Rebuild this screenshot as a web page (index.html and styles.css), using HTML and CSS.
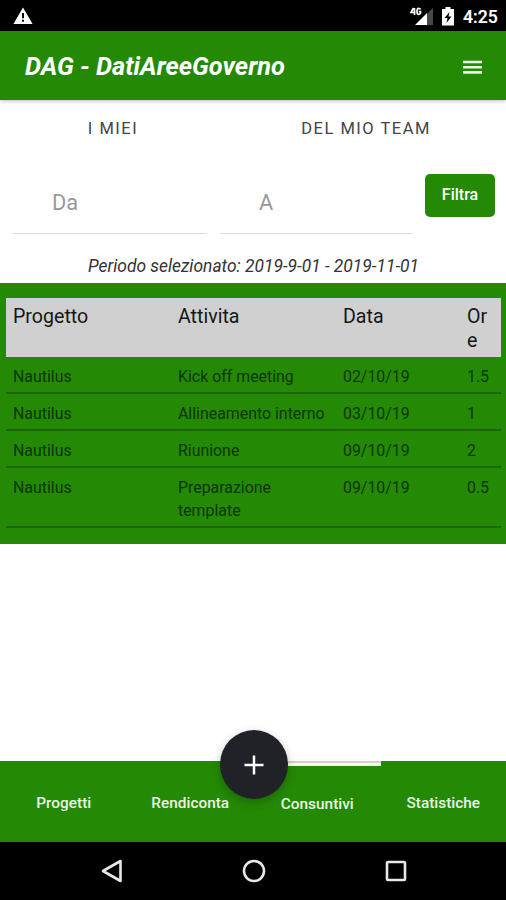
FILE: index.html
```html
<!DOCTYPE html>
<html lang="it">
<head>
<meta charset="utf-8">
<title>DAG - DatiAreeGoverno</title>
<link rel="stylesheet" href="styles.css">
</head>
<body>
<div class="screen">
  <div class="status">
    <svg class="warn" width="20" height="18" viewBox="0 0 20 18"><path d="M10 0.5L19.6 17H.4z" fill="#fff"/><path d="M10 6v5.200M10 12.700v2" stroke="#000" stroke-width="1.900"/></svg>
    <div class="status-right">
      <svg width="24" height="20" viewBox="0 0 24 20"><path d="M5 18L17 6V18z" fill="#fff"/><path d="M17 6.500L23 1V18H17z" fill="#484848"/><path d="M3.500 1L1 5.500H5.500M4.500 1V8M10.500 2.500Q10 1.300 8.700 1.300Q7 1.300 7 4.400Q7 7.300 8.700 7.300Q9.800 7.300 10.500 6.500V4.700H8.800" fill="none" stroke="#fff" stroke-width="1.700"/></svg>
      <svg class="battery" width="12" height="19" viewBox="0 0 12 19"><path d="M3.500 0h5v2H12v16.500H0V2h3.500z" fill="#fff"/><path d="M7.500 5L2.500 11h3L4.500 16 9.500 9.500h-3z" fill="#000"/></svg>
      <span class="clock">4:25</span>
    </div>
  </div>
  <header class="appbar">
    <h1>DAG - DatiAreeGoverno</h1>
    <svg width="19" height="14" viewBox="0 0 19 14"><path d="M0 2H19M0 7.200H19M0 12.400H19" stroke="#e9f5e5" stroke-width="2.600"/></svg>
  </header>
  <nav class="segments"><span>I MIEI</span><span>DEL MIO TEAM</span></nav>
  <div class="filters">
    <div class="field">Da</div>
    <div class="field">A</div>
    <button class="filter-btn">Filtra</button>
  </div>
  <p class="period">Periodo selezionato: 2019-9-01 - 2019-11-01</p>
  <main class="report">
    <div class="row head"><span>Progetto</span><span>Attivita</span><span>Data</span><span>Ore</span></div>
    <div class="row"><span>Nautilus</span><span>Kick off meeting</span><span>02/10/19</span><span>1.5</span></div>
    <div class="row"><span>Nautilus</span><span>Allineamento interno</span><span>03/10/19</span><span>1</span></div>
    <div class="row"><span>Nautilus</span><span>Riunione</span><span>09/10/19</span><span>2</span></div>
    <div class="row"><span>Nautilus</span><span>Preparazione template</span><span>09/10/19</span><span>0.5</span></div>
  </main>
  <footer class="tabs">
    <span>Progetti</span><span>Rendiconta</span><span class="active">Consuntivi</span><span>Statistiche</span>
    <div class="fab"><svg width="20" height="20" viewBox="0 0 20 20"><path d="M10 .5V19.500M.5 10H19.500" stroke="#fff" stroke-width="2.500"/></svg></div>
  </footer>
  <div class="sysnav">
    <svg width="22" height="24" viewBox="0 0 22 24"><path d="M2 12L19.500 2V22z"/></svg>
    <svg width="24" height="24" viewBox="0 0 24 24"><circle cx="12" cy="12" r="10"/></svg>
    <svg width="22" height="22" viewBox="0 0 22 22"><rect x="2" y="2" width="18" height="18" rx="1"/></svg>
  </div>
</div>
</body>
</html>
```
FILE: styles.css
```css
* { box-sizing: border-box; }
body { margin: 0; background: #fff; font-family: Roboto, sans-serif; color: #000; }
.screen { width: 506px; height: 900px; display: flex; flex-direction: column; overflow: hidden; }
.status { height: 31px; flex: none; background: #000; display: flex; justify-content: space-between; padding: 7px 9px 0 13px; color: #fff; }
.status-right { display: flex; }
.battery { margin: 0 9px 0 8px; }
.clock { font-size: 17.6px; line-height: 20px; font-weight: 500; width: 34px; white-space: nowrap; -webkit-text-stroke: .2px #fff; }
.appbar { height: 69px; flex: none; background: #248905; display: flex; align-items: center; justify-content: space-between; padding: 0 24px 0 25px; box-shadow: 0 1px 4px rgba(30, 20, 60, .3); }
.appbar h1 { margin: 1px 0 0; font-size: 25.4px; line-height: 30px; font-weight: 700; font-style: italic; color: #fff; white-space: nowrap; }
.appbar svg { margin-top: 3px; }
.segments { height: 59px; flex: none; display: grid; grid-template-columns: 226px 1fr; text-align: center; font-size: 16.5px; letter-spacing: 1.5px; line-height: 20px; padding-top: 19px; color: #444; }
.filters { height: 75px; flex: none; display: flex; padding-left: 13px; }
.field { width: 194px; height: 75px; margin-right: 13px; padding: 30px 0 0 39px; border-bottom: 1px solid #ddd; font-size: 21.8px; line-height: 28px; color: #999; }
.filter-btn { margin: 15px 0 0 -1px; width: 70px; height: 43px; padding: 0 0 2px; border: 0; border-radius: 5px; background: #248905; color: #fff; font: 500 16px Roboto, sans-serif; }
.field + .field { width: 193px; }
.period { flex: none; height: 49px; margin: 0; padding: 20px 0 0 1px; line-height: 24px; font-size: 17.4px; font-style: italic; text-align: center; color: #333; }
.report { flex: none; height: 261px; background: #248905; padding: 15px 5px 0 6px; }
.row { display: grid; grid-template-columns: 165px 165px 124px 41px; border-bottom: 2px solid #1b6504; padding: 8px 0 4px; font-size: 15.9px; line-height: 23px; color: #0e3502; }
.row span { padding: 0 7px; overflow-wrap: anywhere; }
.row.head { height: 59px; background: #d0d0d0; border: 0; padding: 7px 0; font-size: 19.6px; line-height: 24px; color: #161616; }
.tabs { position: relative; height: 81px; flex: none; margin-top: auto; background: #248905; display: grid; grid-template-columns: repeat(4, 1fr); }
.tabs span { padding: 31px 0 0 1px; line-height: 22px; font-size: 15.4px; font-weight: 500; text-align: center; color: #e8f4e4; }
.tabs .active { padding-top: 32px; margin-right: -1px; background: linear-gradient(#c8d8c2 0 2px, #f8fcf6 2px 5px, transparent 5px); }
.fab { position: absolute; left: 220px; top: -31px; width: 68px; height: 69px; border-radius: 50%; background: #202227; display: flex; align-items: center; justify-content: center; box-shadow: 0 3px 10px rgba(0, 0, 0, .25); }
.sysnav { height: 58px; flex: none; background: #000; display: flex; justify-content: space-between; align-items: center; padding: 0 99px 0 101px; }
.sysnav svg { fill: none; stroke: #e8e8e8; stroke-width: 2.6; stroke-linejoin: round; }
```
